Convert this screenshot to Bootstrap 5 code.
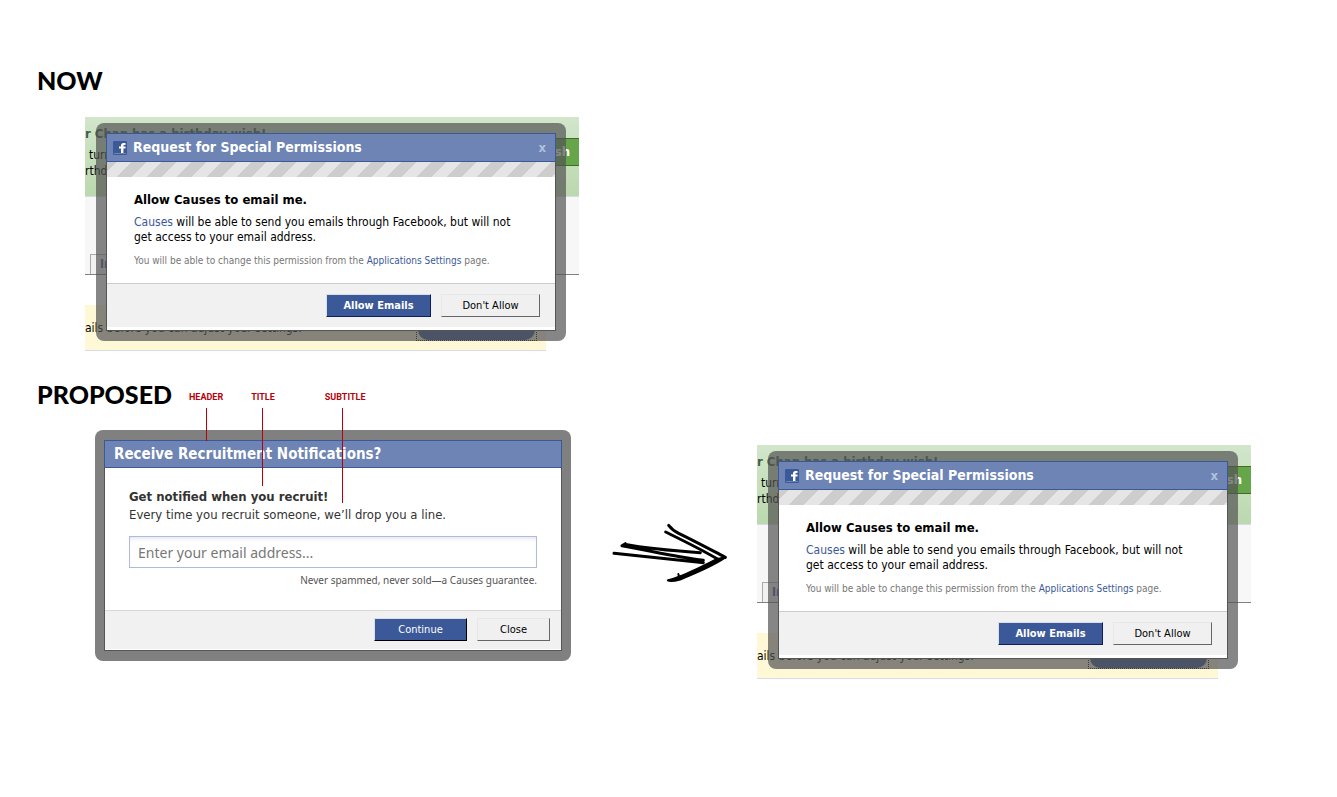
<!DOCTYPE html>
<html lang="en">
<head>
<meta charset="utf-8">
<meta name="viewport" content="width=device-width, initial-scale=1">
<title>Email permission flow</title>
<link href="https://cdn.jsdelivr.net/npm/bootstrap@5.3.0/dist/css/bootstrap.min.css" rel="stylesheet">
<style>
  :root { --fb: #3b5998; --fb-light: #6d84b4; --note: #b7000a; }
  body { font-family: "DejaVu Sans Condensed", "Noto Sans", sans-serif; font-size: 12px; line-height: 15px; color: #000; background: #fff; }
  a { color: var(--fb); text-decoration: none; }
  .board { padding: 63px 37px 48px; }
  .stage-title { font: 900 25px/34px Lato, sans-serif; margin: 0; }
  .now-scene { margin: 20px 0 0 48px; }

  /* Slice of the page with the dialog stacked over it */
  .scene { display: grid; flex: 0 1 494px; width: 100%; max-width: 494px; overflow: hidden; }
  .scene > * { grid-area: 1 / 1; min-width: 0; }
  .page-slice { white-space: nowrap; }
  .wish { height: 80px; background: linear-gradient(#d2e6cb, #bbd8ae); border-bottom: 1px solid #d4dce8; overflow: hidden; padding-top: 8px; line-height: 16px; }
  .wish-title { font-size: 13px; font-weight: 700; color: #3f6146; margin: 0 0 5px; line-height: 17px; }
  .wish-btn { height: 28px; width: 56px; background: #67a54b; border: 1px solid #3b6e22; border-right-width: 0; color: #fff; font-size: 13px; font-weight: 700; text-align: right; padding: 0 9px 0 0; margin-top: 13px; }
  .tabs-strip { height: 78px; background: #f7f7f7; border-bottom: 1px solid #808080; padding-left: 5px; }
  .tab-stub { width: 70px; height: 20px; border: 1px solid #aaa; border-bottom: 0; background: #f1f1f1; color: var(--fb); font-weight: 700; padding: 0 9px; line-height: 19px; }
  .warn { height: 46px; margin: 30px 33px 0 0; background: #fff8d6; border-bottom: 1px solid #d8dce8; line-height: 16px; }
  .focus-ring-box { width: 121px; height: 32px; border: 1px dotted #000; padding: 0 1px; margin: 4px 9px 0 0; }
  .pill-btn { display: block; width: 100%; height: 100%; border: 0; border-radius: 10px; background: var(--fb); }

  .shade { border-radius: 8px; background: rgba(82,82,82,.7); padding: 10px; }
  .scene .shade { margin: 6px 13px 10px 11px; }
  .dialog-box { background: #fff; border: 1px solid #555; border-top: 0; }
  .dialog-head { background: var(--fb-light); border: 1px solid var(--fb); margin: 0 -1px; height: 29px; padding: 0 8px 0 6px; color: #fff; }
  .dialog-head h3 { font-size: 14px; line-height: 27px; font-weight: 700; margin: 0 auto 0 6px; }
  .x-btn { border: 0; padding: 0 1px 1px; background: none; color: #b3c0dc; font-size: 13px; font-weight: 700; line-height: 15px; }
  .stripes { height: 15px; background: linear-gradient(135deg, #cdcdcd 25%, #e5e5e5 25% 50%, #cdcdcd 50% 75%, #e5e5e5 75%) -5px 0 / 30px 30px; }
  .dialog-main { padding: 14px 27px 15px; }
  .dialog-main h4 { font-size: 13px; line-height: 17px; font-weight: 700; margin: 0 0 7px; }
  .dialog-main p { margin: 0 0 8px; }
  .dialog-main .fine { font-size: 10px; color: #777; margin: 0; }
  .dialog-foot { background: #f1f1f1; border-top: 1px solid #ccc; padding: 10px 15px; margin-bottom: 3px; gap: 10px; }
  .fb-btn { height: 23px; border: 1px solid; padding: 0; font-size: 11px; line-height: 20px; }
  .fb-go { width: 105px; background: var(--fb); color: #fff; border-color: #d9dfea #0e1f5b #0e1f5b #d9dfea; font-weight: 700; }
  .fb-no { width: 99px; background: #f0f0f0; color: #000; border-color: #e7e7e7 #666 #666 #e7e7e7; }

  /* Proposed step */
  .proposed { margin-top: 26px; }
  .callouts { font: 700 9px/12px Roboto, sans-serif; color: var(--note); margin-left: 17px; padding-top: 14px; }
  .callout { position: relative; }
  .callout::after { content: ""; position: absolute; z-index: 1; top: 17px; left: 17px; width: 1px; height: 33px; background: var(--note); }
  .callout-title { margin-left: 28px; }
  .callout-title::after { left: 11px; height: 78px; }
  .callout-sub { margin-left: 50px; }
  .callout-sub::after { height: 95px; }
  .flow { margin-top: 19px; }
  .proposal { flex: 0 1 476px; margin-left: 58px; background: #808080; padding: 10px 9px; }
  .proposal .dialog-head { height: 28px; padding-left: 9px; }
  .proposal .dialog-head h3 { margin-left: 0; font-size: 15px; line-height: 27px; }
  .proposal .dialog-main { padding: 20px 24px 22px; color: #333; }
  .proposal .dialog-main h4 { margin: 0; line-height: 18px; }
  .proposal .dialog-main p { font-size: 13px; line-height: 18px; margin-bottom: 12px; }
  .mail-input { height: 32px; border: 1px solid #b0bbd8; border-radius: 0; padding: 0 8px; font: 14px "Noto Sans", sans-serif; box-shadow: inset 0 4px 5px -3px #dde; }
  .mail-input::placeholder { color: #777; opacity: 1; }
  .proposal .dialog-main .guarantee { font: 10px/16px "Noto Sans", sans-serif; color: #555; margin: 4px 0 0; }
  .proposal .dialog-foot { border-color: #d8d8d8; padding: 7px 11px 8px; margin-bottom: 1px; }
  .proposal .fb-go { width: 93px; font-weight: 400; border-color: #d9dfea #000 #000 #d9dfea; }
  .proposal .fb-no { width: 73px; }
  .arrow { flex: 0 0 116px; margin: 92px 29px 0 41px; }
  .flow .scene { margin-top: 15px; }
</style>
</head>
<body>
<main class="board">
  <section>
    <h2 class="stage-title">NOW</h2>
    <div class="scene now-scene">
      <div class="page-slice">
        <div class="wish d-flex justify-content-between">
          <div><div class="wish-title">r Chan has a birthday wish!</div><div class="ps-1">turns 24</div><div>rthday</div></div>
          <button class="wish-btn" type="button">Wish</button>
        </div>
        <div class="tabs-strip d-flex align-items-end"><div class="tab-stub">Info</div></div>
        <div class="warn d-flex justify-content-between">
          <span class="align-self-center">ails before you can adjust your settings.</span>
          <div class="focus-ring-box"><button class="pill-btn" type="button" aria-label="Settings"></button></div>
        </div>
      </div>
      <div class="shade align-self-start">
        <div class="dialog-box">
          <div class="dialog-head d-flex align-items-center">
            <svg width="14" height="14" viewBox="0 0 14 14" aria-hidden="true"><rect width="14" height="14" rx="1" fill="#3b5998"/><path d="M1 12.500h12" stroke="#6d84b4"/><path d="M8 12V7.500H6V5.500h2V4.500Q8 2 10.500 2H12.500v2h-1.300Q10.400 4 10.400 4.800V5.500H12.500v2H10.400V12z" fill="#fff"/></svg>
            <h3>Request for Special Permissions</h3>
            <button class="x-btn" type="button" aria-label="Close">x</button>
          </div>
          <div class="stripes"></div>
          <div class="dialog-main">
            <h4>Allow Causes to email me.</h4>
            <p><a href="#">Causes</a> will be able to send you emails through Facebook, but will not get access to your email address.</p>
            <p class="fine">You will be able to change this permission from the <a href="#">Applications Settings</a> page.</p>
          </div>
          <div class="dialog-foot d-flex justify-content-end">
            <button class="fb-btn fb-go" type="button">Allow Emails</button>
            <button class="fb-btn fb-no" type="button">Don't Allow</button>
          </div>
        </div>
      </div>
    </div>
  </section>

  <section class="proposed">
    <div class="d-flex align-items-start">
      <h2 class="stage-title">PROPOSED</h2>
      <div class="callouts d-flex">
        <span class="callout">HEADER</span>
        <span class="callout callout-title">TITLE</span>
        <span class="callout callout-sub">SUBTITLE</span>
      </div>
    </div>
    <div class="flow d-flex align-items-start">
      <form class="shade proposal">
        <div class="dialog-box">
          <div class="dialog-head"><h3>Receive Recruitment Notifications?</h3></div>
          <div class="dialog-main">
            <h4>Get notified when you recruit!</h4>
            <p><label for="mail">Every time you recruit someone, we’ll drop you a line.</label></p>
            <input class="form-control mail-input" id="mail" type="email" placeholder="Enter your email address...">
            <p class="guarantee text-end">Never spammed, never sold—a Causes guarantee.</p>
          </div>
          <div class="dialog-foot d-flex justify-content-end">
            <button class="fb-btn fb-go" type="button">Continue</button>
            <button class="fb-btn fb-no" type="button">Close</button>
          </div>
        </div>
      </form>

      <svg class="arrow" width="116" height="62" viewBox="36 36 348 186" fill="none" stroke="#000" stroke-width="9" stroke-linecap="round" stroke-linejoin="round" role="img" aria-label="leads to">
        <path d="M42 130C130 139 220 149 310 158M66 107C150 122 230 141 310 151M74 103C150 118 225 123 301 128M66 107L76 101"/>
        <path d="M206 46C212 54 220 62 236 70C282 92 330 118 376 142M197 66C250 92 304 118 354 148"/>
        <path d="M376 142L350 148C310 168 272 188 238 200C224 206 212 210 204 211C212 216 226 212 240 208C290 188 340 166 376 142Z" fill="#000" stroke-width="7"/>
        <path d="M235 192L238 204" stroke-width="6"/>
      </svg>

      <div class="scene">
        <div class="page-slice">
          <div class="wish d-flex justify-content-between">
            <div><div class="wish-title">r Chan has a birthday wish!</div><div class="ps-1">turns 24</div><div>rthday</div></div>
            <button class="wish-btn" type="button">Wish</button>
          </div>
          <div class="tabs-strip d-flex align-items-end"><div class="tab-stub">Info</div></div>
          <div class="warn d-flex justify-content-between">
            <span class="align-self-center">ails before you can adjust your settings.</span>
            <div class="focus-ring-box"><button class="pill-btn" type="button" aria-label="Settings"></button></div>
          </div>
        </div>
        <div class="shade align-self-start">
          <div class="dialog-box">
            <div class="dialog-head d-flex align-items-center">
              <svg width="14" height="14" viewBox="0 0 14 14" aria-hidden="true"><rect width="14" height="14" rx="1" fill="#3b5998"/><path d="M1 12.500h12" stroke="#6d84b4"/><path d="M8 12V7.500H6V5.500h2V4.500Q8 2 10.500 2H12.500v2h-1.300Q10.400 4 10.400 4.800V5.500H12.500v2H10.400V12z" fill="#fff"/></svg>
              <h3>Request for Special Permissions</h3>
              <button class="x-btn" type="button" aria-label="Close">x</button>
            </div>
            <div class="stripes"></div>
            <div class="dialog-main">
              <h4>Allow Causes to email me.</h4>
              <p><a href="#">Causes</a> will be able to send you emails through Facebook, but will not get access to your email address.</p>
              <p class="fine">You will be able to change this permission from the <a href="#">Applications Settings</a> page.</p>
            </div>
            <div class="dialog-foot d-flex justify-content-end">
              <button class="fb-btn fb-go" type="button">Allow Emails</button>
              <button class="fb-btn fb-no" type="button">Don't Allow</button>
            </div>
          </div>
        </div>
      </div>
    </div>
  </section>
</main>
<script src="https://cdn.jsdelivr.net/npm/bootstrap@5.3.0/dist/js/bootstrap.bundle.min.js"></script>
</body>
</html>
